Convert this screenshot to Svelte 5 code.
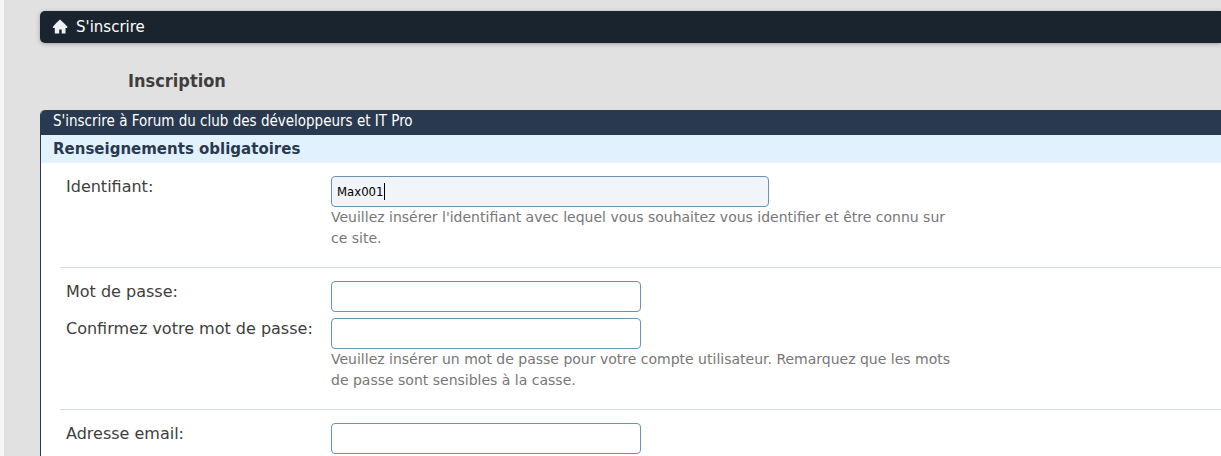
<script>
  let username = $state('Max001');
  let password = $state('');
  let confirmation = $state('');
  let email = $state('');
</script>

<main class="page">
  <nav class="breadcrumb" aria-label="Navigation">
    <a class="home" href="#accueil" aria-label="Accueil">
      <svg viewBox="0 0 16 16" width="16" height="16" aria-hidden="true">
        <path d="M8 .5 12 4.200 15.500 7.800 15 9H13.500V14.500H9.700V10.500H7.200V14.500H2.800V9H1.200L.7 8 4.500 3.800z" fill="#eef1f3" />
      </svg>
    </a>
    <span>S'inscrire</span>
  </nav>

  <h1>Inscription</h1>

  <form class="panel">
    <h2>S'inscrire à Forum du club des développeurs et IT Pro</h2>
    <h3>Renseignements obligatoires</h3>

    <div class="groups">
      <section class="group">
        <div class="row">
          <label for="username">Identifiant:</label>
          <div class="field wide">
            <input id="username" type="text" bind:value={username} />
            {#if username === 'Max001'}<span class="caret"></span>{/if}
          </div>
        </div>
        <p>Veuillez insérer l'identifiant avec lequel vous souhaitez vous identifier et être connu sur ce site.</p>
      </section>

      <section class="group">
        <div class="row">
          <label for="password">Mot de passe:</label>
          <div class="field"><input id="password" type="password" bind:value={password} /></div>
        </div>
        <div class="row">
          <label for="confirmation">Confirmez votre mot de passe:</label>
          <div class="field"><input id="confirmation" type="password" bind:value={confirmation} /></div>
        </div>
        <p>Veuillez insérer un mot de passe pour votre compte utilisateur. Remarquez que les mots de passe sont sensibles à la casse.</p>
      </section>

      <section class="group">
        <div class="row">
          <label for="email">Adresse email:</label>
          <div class="field"><input id="email" type="email" bind:value={email} /></div>
        </div>
      </section>
    </div>
  </form>
</main>

<style>
  :global(body) {
    background: #e1e1e1;
    overflow: hidden;
  }

  .page {
    box-sizing: border-box;
    min-height: 100vh;
    padding: 11px 0 0 36px;
    border-left: 4px solid #f7f7f7;
    color: #3e3e3e;
    font-family: Verdana, "DejaVu Sans", sans-serif;
    font-size: 16px;
  }

  .breadcrumb {
    display: flex;
    align-items: center;
    gap: 8px;
    height: 32px;
    padding-left: 12px;
    border-radius: 5px 0 0 5px;
    background: #1a242f;
    box-shadow: 0 1px 4px rgb(60 30 40 / 35%);
    color: #fff;
    font-size: 15px;
    line-height: 20px;
  }

  .home {
    display: flex;
  }

  h1,
  h2,
  h3,
  p {
    margin: 0;
  }

  h1 {
    padding: 25px 0 16px 88px;
    font-family: Tahoma, "DejaVu Sans Condensed", sans-serif;
    font-size: 18px;
    line-height: 26px;
  }

  .panel {
    border-left: 1px solid #29394f;
    border-radius: 5px 0 0 0;
    background: #fff;
    overflow: hidden;
  }

  h2 {
    padding: 0 12px 3px;
    background: #29394f;
    color: #fff;
    font-family: Tahoma, "DejaVu Sans Condensed", sans-serif;
    font-size: 15px;
    font-weight: 400;
    line-height: 22px;
  }

  h3 {
    padding: 1px 12px 0;
    background: #e1f2fe;
    color: #29394f;
    font-size: 15px;
    line-height: 27px;
  }

  .groups {
    padding-left: 19px;
  }

  .group {
    padding: 13px 6px 18px;
    border-bottom: 1px solid #cddde8;
  }

  .row {
    display: grid;
    grid-template-columns: 265px minmax(0, 1fr);
  }

  .row + .row {
    margin-top: 6px;
  }

  label {
    line-height: 22px;
  }

  .field {
    position: relative;
    max-width: 310px;
  }

  .field.wide {
    max-width: 438px;
  }

  input {
    display: block;
    box-sizing: border-box;
    width: 100%;
    height: 31px;
    padding: 0 5px;
    border: 1px solid #6c93ad;
    border-radius: 4px;
    background: #fff;
    color: #000;
    font-family: Tahoma, "DejaVu Sans Condensed", sans-serif;
    font-size: 13px;
    outline: none;
  }

  .wide input {
    background: #f1f5f9;
  }

  .caret {
    position: absolute;
    top: 7px;
    left: 53px;
    width: 1px;
    height: 17px;
    background: #000;
  }

  p {
    max-width: 620px;
    margin-left: 265px;
    color: #777;
    font-size: 14px;
    line-height: 21px;
  }
</style>
